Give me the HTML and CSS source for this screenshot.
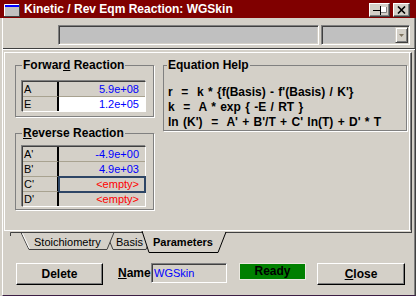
FILE: index.html
```html
<!DOCTYPE html>
<html>

<head>
    <meta charset="utf-8">
    <title>Kinetic / Rev Eqm Reaction: WGSkin</title>
    <link rel="stylesheet" href="styles.css">
</head>

<body>
    <div class="titlebar">
        <svg class="appicon" width="16" height="13" viewBox="0 0 16 13">
            <rect x="0.5" y="0.5" width="15" height="12" fill="#c0c0c0" stroke="#404040" />
            <path d="M0.5 12 V0.5 H15" stroke="#fff" fill="none" />
            <rect x="1" y="1" width="14" height="2" fill="#0000ff" />
        </svg>
        <span class="caption">Kinetic / Rev Eqm Reaction: WGSkin</span>
        <span class="capbtn pin">
            <svg width="17" height="10" viewBox="0 0 17 10">
                <path d="M2 5.5 H9" stroke="#000" />
                <path d="M9.5 1 V10" stroke="#000" />
                <rect x="10" y="2" width="5" height="6" fill="#fff" />
                <path d="M10 7.5 H15.5 V2" stroke="#808080" fill="none" />
            </svg>
        </span>
        <span class="capbtn close">
            <svg width="9" height="8" viewBox="0 0 9 8">
                <path d="M1 0.5 L8 7.5 M8 0.5 L1 7.5" stroke="#000" stroke-width="1.6" />
            </svg>
        </span>
    </div>

    <div class="client">
        <div class="toolbar">
            <div class="field wide"></div>
            <div class="field combo">
                <span class="dropbtn">
                    <svg width="5" height="3" viewBox="0 0 5 3">
                        <polygon points="0,0 5,0 2.5,3" fill="#7f7460" />
                    </svg>
                </span>
            </div>
        </div>

        <div class="panel">
            <div class="leftcol">
                <fieldset class="group fwd">
                    <legend>Forwar<u>d</u> Reaction</legend>
                    <div class="grid">
                        <div class="row"><span class="key">A</span><span class="val">5.9e+08</span></div>
                        <div class="row"><span class="key">E</span><span class="val cur">1.2e+05</span></div>
                    </div>
                </fieldset>
                <fieldset class="group rev">
                    <legend><u>R</u>everse Reaction</legend>
                    <div class="grid">
                        <div class="row"><span class="key">A'</span><span class="val">-4.9e+00</span></div>
                        <div class="row"><span class="key">B'</span><span class="val">4.9e+03</span></div>
                        <div class="row"><span class="key">C'</span><span class="val empty focus">&lt;empty&gt;</span></div>
                        <div class="row"><span class="key">D'</span><span class="val empty">&lt;empty&gt;</span></div>
                    </div>
                </fieldset>
            </div>
            <fieldset class="group eq">
                <legend>Equation Help</legend>
                <div class="eqtext">r  =  k * {f(Basis) - f'(Basis) / K'}
k  =  A * exp { -E / RT }
ln (K')  =  A' + B'/T + C' ln(T) + D' * T</div>
            </fieldset>
        </div>

        <svg class="tabs" width="412" height="26" viewBox="3 230 412 26">
            <path d="M4 230.5 H410" stroke="#fff" />
            <path d="M225 232.5 H411.5 M411.5 230 V233" stroke="#404040" />
            <polygon points="106,232.5 113,249.5 146,249.5 153,232.5" fill="#d4d0c8" stroke="#404040" />
            <polygon points="21,232.5 29,249.5 107,249.5 114,232.5" fill="#d4d0c8" stroke="#404040" />
            <path d="M22.5 233.5 L29.5 248.5" stroke="#fff" />
            <path d="M10.5 236 V232.5 H21" stroke="#404040" fill="none" />
            <polygon points="142,231 149,252.5 218,252.5 226,231" fill="#d4d0c8" />
            <polyline points="142,231 149,252.5 218,252.5 226,232" stroke="#000" fill="none" />
            <text x="34" y="246">Stoichiometry</text>
            <text x="116" y="246">Basis</text>
            <text class="on" x="153" y="246">Parameters</text>
        </svg>

        <div class="actions">
            <div class="btn">Delete</div>
            <span class="label"><u>N</u>ame</span>
            <div class="namebox">WGSkin</div>
            <div class="ready">Ready</div>
            <div class="btn close"><u>C</u>lose</div>
        </div>
    </div>
</body>

</html>
```

FILE: styles.css
```css
* {
    margin: 0;
    padding: 0;
    box-sizing: border-box;
}

body {
    width: 416px;
    height: 296px;
    overflow: hidden;
    background-color: #d4d0c8;
    font-family: "Liberation Sans", Arial, sans-serif;
    font-size: 11px;
    color: #000;
}

/* title bar */
.titlebar {
    display: flex;
    align-items: flex-start;
    height: 18px;
    background-color: #800000;
    color: #fff;
}

.appicon {
    margin: 4px 0 0 4px;
}

.caption {
    flex: 1;
    margin-left: 4px;
    font-size: 12px;
    font-weight: bold;
    line-height: 18px;
    white-space: nowrap;
}

.capbtn {
    display: flex;
    align-items: center;
    justify-content: center;
    height: 14px;
    margin-top: 3px;
    background-color: #d4d0c8;
    border: 1px solid;
    border-color: #fff #404040 #404040 #fff;
    box-shadow: inset -1px -1px 0 #808080;
}

.capbtn.pin {
    width: 21px;
}

.capbtn.close {
    width: 17px;
    margin-left: 3px;
    margin-right: 6px;
}

/* window body */
.client {
    display: flex;
    flex-direction: column;
    height: 278px;
    margin-left: 2px;
    border-left: 1px solid #fff;
    border-right: 1px solid #404040;
    border-bottom: 1px solid #3c1f45;
    box-shadow: inset -1px 0 0 #808080;
}

.toolbar {
    display: flex;
    height: 31px;
    padding: 7px 0 3px 55px;
    border-bottom: 1px solid #404040;
    box-shadow: 0 1px 0 #fff;
}

.field {
    height: 20px;
    background-color: #c0c0c0;
    border: 1px solid;
    border-color: #808080 #fff #fff #808080;
    box-shadow: inset 1px 1px 0 #404040, inset -1px -1px 0 #d4d0c8;
}

.field.wide {
    width: 261px;
}

.field.combo {
    display: flex;
    justify-content: flex-end;
    width: 89px;
    margin-left: 2px;
    padding: 1px;
}

.dropbtn {
    display: flex;
    align-items: center;
    justify-content: center;
    width: 13px;
    height: 16px;
    background-color: #d4d0c8;
    border: 1px solid;
    border-color: #d4d0c8 #404040 #404040 #d4d0c8;
    box-shadow: inset 1px 1px 0 #fff, inset -1px -1px 0 #808080;
}

/* main panel */
.panel {
    display: flex;
    align-items: flex-start;
    width: 408px;
    height: 178px;
    margin: 3px 0 0 1px;
    padding: 5px 0 0 10px;
    border-top: 1px solid #fff;
    border-left: 1px solid #fff;
    border-right: 1px solid #404040;
    box-shadow: inset -1px 0 0 #808080, inset -2px 0 0 #fff;
}

.leftcol {
    display: flex;
    flex-direction: column;
    width: 139px;
}

.group {
    min-width: 0;
    border: 1px solid #808080;
    box-shadow: 1px 1px 0 #fff;
}

.group legend {
    margin-left: 0;
    padding: 0 1px;
    font-size: 12px;
    font-weight: bold;
    line-height: 14px;
}

.fwd {
    padding: 9px 7px 4px 6px;
}

.rev {
    margin-top: 9px;
    padding: 6px 7px 2px 6px;
}

.eq {
    width: 244px;
    margin-left: 9px;
    padding: 13px 4px 0 4px;
}

.eq legend {
    margin-left: -1px;
}

.eqtext {
    font-size: 12px;
    font-weight: bold;
    line-height: 15px;
    white-space: pre;
    word-spacing: 1px;
}

/* data grids */
.grid {
    width: 124px;
    border: 1px solid;
    border-color: #404040 #fff #fff #404040;
    box-shadow: -1px -1px 0 #808080;
}

.row {
    display: flex;
    height: 15px;
    line-height: 14px;
}

.row:last-child {
    height: 14px;
}

.key,
.val {
    border-bottom: 1px solid #a8a290;
}

.row:last-child .key,
.row:last-child .val {
    border-bottom: 0;
}

.key {
    width: 36px;
    padding-left: 1px;
    border-right: 2px solid #000;
}

.val {
    flex: 1;
    padding-right: 6px;
    text-align: right;
    color: #0000ff;
}

.val.cur {
    background-color: #fff;
}

.val.empty {
    color: #ff0000;
}

.val.focus {
    outline: 2px solid #2d4565;
    outline-offset: -1px;
}

/* tabs */
.tabs {
    display: block;
    flex: none;
}

.tabs text {
    font-family: "Liberation Sans", Arial, sans-serif;
    font-size: 11px;
    fill: #000;
}

.tabs text.on {
    font-weight: bold;
}

/* bottom row */
.actions {
    display: flex;
    align-items: flex-start;
    flex: 1;
    padding: 7px 0 0 13px;
    font-size: 12px;
    font-weight: bold;
}

.btn {
    width: 87px;
    height: 22px;
    border: 1px solid;
    border-color: #fff #000 #000 #fff;
    box-shadow: inset -1px -1px 0 #808080;
    line-height: 20px;
    text-align: center;
}

.btn.close {
    width: 88px;
    margin-left: 11px;
}

.label {
    width: 33px;
    margin-left: 15px;
    line-height: 20px;
    white-space: nowrap;
}

.namebox {
    width: 76px;
    height: 20px;
    padding-left: 2px;
    border: 1px solid;
    border-color: #808080 #fff #fff #808080;
    box-shadow: inset 1px 1px 0 #404040;
    color: #0000ff;
    font-size: 11px;
    font-weight: normal;
    line-height: 18px;
}

.ready {
    width: 67px;
    height: 17px;
    margin-left: 12px;
    background-color: #008000;
    border: 1px solid #eae8e0;
    line-height: 15px;
    text-align: center;
}
```
